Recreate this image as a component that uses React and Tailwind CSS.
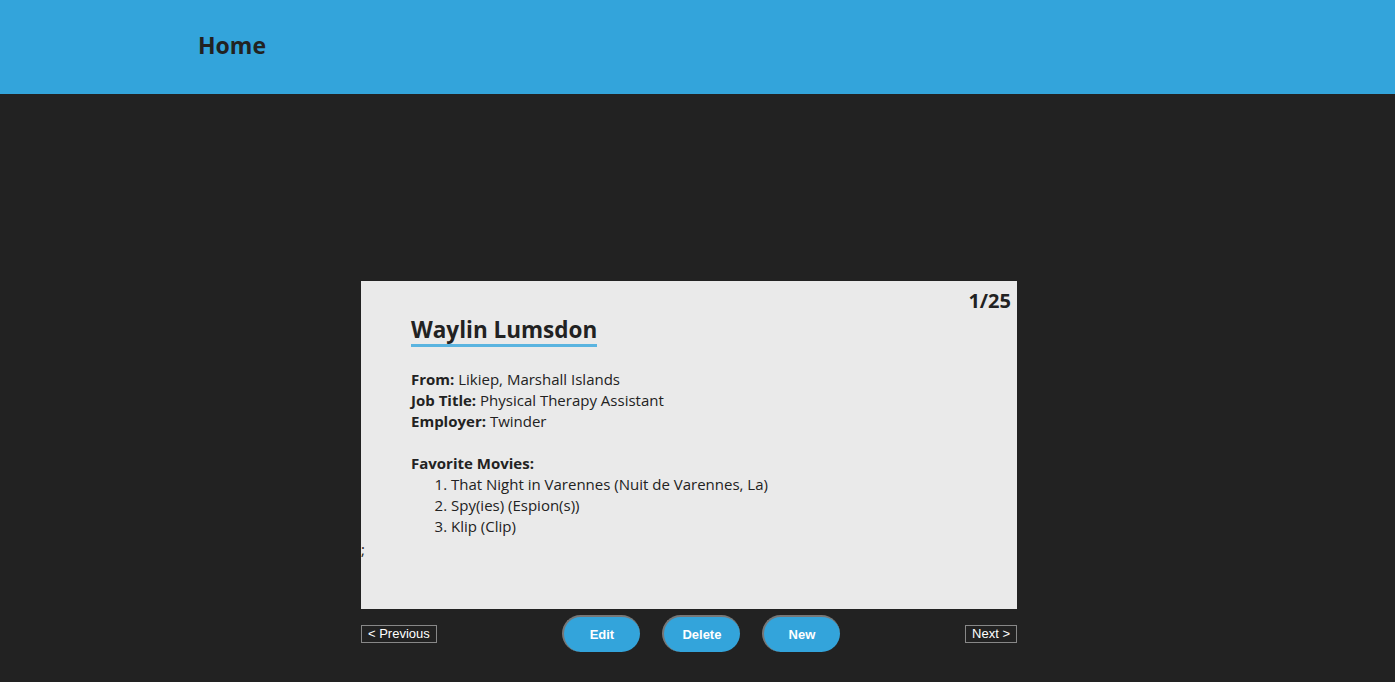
import React from "react";

const movies = [
  "That Night in Varennes (Nuit de Varennes, La)",
  "Spy(ies) (Espion(s))",
  "Klip (Clip)",
];

const App = () => {
  return (
    <div className="min-h-screen bg-[#222222] font-['Open_Sans',sans-serif]">
      <header className="h-[94px] bg-[#33a4db] flex items-center pl-[198px] pb-[4px]">
        <h1 className="text-[23px] font-bold text-[#222222]">Home</h1>
      </header>

      <main className="w-[656px] ml-[361px] pt-[187px]">
        <div className="relative h-[328px] bg-[#eaeaea] text-[#222222]">
          <span className="absolute top-[5px] right-[6px] text-[20px] font-bold">
            1/25
          </span>
          <div className="pl-[50px] pt-[34px]">
            <h2 className="inline-block text-[22.5px] leading-[29px] font-bold border-b-[3px] border-[#5ab4e0]">
              Waylin Lumsdon
            </h2>
            <div className="mt-[22px] text-[15px] leading-[21px]">
              <p>
                <b>From:</b> Likiep, Marshall Islands
              </p>
              <p>
                <b>Job Title:</b> Physical Therapy Assistant
              </p>
              <p>
                <b>Employer:</b> Twinder
              </p>
              <p className="mt-[21px] font-bold">Favorite Movies:</p>
              <ol className="list-decimal pl-[40px]">
                {movies.map((m) => (
                  <li key={m}>{m}</li>
                ))}
              </ol>
            </div>
          </div>
          <span className="text-[15px] leading-[21px]">;</span>
        </div>

        <div className="flex items-center justify-between mt-[6px] font-['Liberation_Sans',sans-serif] text-[13px] text-white">
          <button className="border border-[#888] px-[6px] leading-[16px]">
            &lt; Previous
          </button>
          <div className="flex gap-[22px]">
            {["Edit", "Delete", "New"].map((b) => (
              <button
                key={b}
                className="w-[78px] h-[37px] rounded-full bg-[#33a4db] border-t-2 border-l-2 border-[#777] font-bold"
              >
                {b}
              </button>
            ))}
          </div>
          <button className="border border-[#888] px-[6px] leading-[16px]">
            Next &gt;
          </button>
        </div>
      </main>
    </div>
  );
};

export default App;
